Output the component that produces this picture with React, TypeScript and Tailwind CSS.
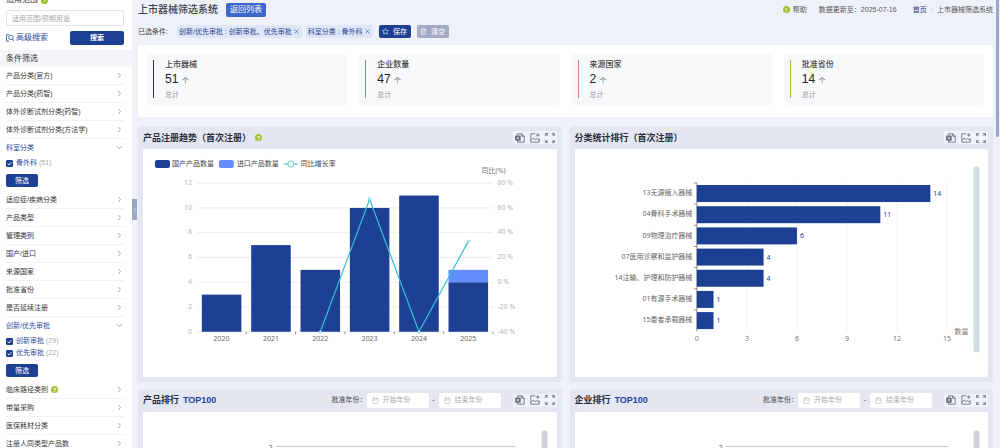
import React, { ReactNode, useState } from "react";
import { Calendar, ChevronDown, ChevronLeft, ChevronRight, Star, Trash2, X } from "lucide-react";

type FilterOption = { label: string; count: number };

type Filter = {
  label: string;
  help?: boolean;
  options?: FilterOption[];
};

const filters: Filter[] = [
  { label: "产品分类(官方)" },
  { label: "产品分类(药智)" },
  { label: "体外诊断试剂分类(药智)" },
  { label: "体外诊断试剂分类(方法学)" },
  { label: "科室分类", options: [{ label: "骨外科", count: 51 }] },
  { label: "适应症/疾病分类" },
  { label: "产品类型" },
  { label: "管理类别" },
  { label: "国产/进口" },
  { label: "来源国家" },
  { label: "批准省份" },
  { label: "是否延续注册" },
  {
    label: "创新/优先审批",
    options: [
      { label: "创新审批", count: 29 },
      { label: "优先审批", count: 22 },
    ],
  },
  { label: "临床路径类别", help: true },
  { label: "带量采购" },
  { label: "医保耗材分类" },
  { label: "注册人同类型产品数" },
];

const stats = [
  { label: "上市器械", value: 51, bar: "bg-[#2b3350]" },
  { label: "企业数量", value: 47, bar: "bg-[#6f93d8]" },
  { label: "来源国家", value: 2, bar: "bg-[#e08080]" },
  { label: "批准省份", value: 14, bar: "bg-[#a3bd2c]" },
];

const trend = [
  { year: 2020, home: 3, imported: 0 },
  { year: 2021, home: 7, imported: 0 },
  { year: 2022, home: 5, imported: 0, rate: -40 },
  { year: 2023, home: 10, imported: 0, rate: 67 },
  { year: 2024, home: 11, imported: 0, rate: -40 },
  { year: 2025, home: 4, imported: 1, rate: 33 },
];

const ranking = [
  { label: "13无源植入器械", value: 14 },
  { label: "04骨科手术器械", value: 11 },
  { label: "09物理治疗器械", value: 6 },
  { label: "07医用诊察和监护器械", value: 4 },
  { label: "14注输、护理和防护器械", value: 4 },
  { label: "01有源手术器械", value: 1 },
  { label: "15患者承载器械", value: 1 },
];

function HelpDot({ mark = "?" }: { mark?: string }) {
  return (
    <span className="inline-flex h-[7px] w-[7px] shrink-0 items-center justify-center rounded-full bg-[#9fbf2a] text-[6px] leading-none font-bold text-white">
      {mark}
    </span>
  );
}

function FilterRow({ filter }: { filter: Filter }) {
  const [open, setOpen] = useState(Boolean(filter.options));

  return (
    <li>
      <button
        onClick={() => setOpen((prev) => !prev)}
        className={`flex h-[18px] w-full items-center justify-between border-b text-left ${
          open && filter.options ? "border-transparent" : "border-[#f1f2f4]"
        }`}>
        <span
          className={`flex items-center gap-[3px] whitespace-nowrap ${
            filter.options ? "text-[#2c4c9c]" : "text-[#333]"
          }`}>
          {filter.label}
          {filter.help && <HelpDot />}
        </span>
        {open && filter.options ? (
          <ChevronDown size={9} className="text-[#888]" />
        ) : (
          <ChevronRight size={9} className="text-[#888]" />
        )}
      </button>
      {open && filter.options && (
        <div className="pb-1">
          {filter.options.map((option) => (
            <label key={option.label} className="flex h-3 items-center gap-[3px] text-[#2c4c9c]">
              <span className="relative flex h-[7px] w-[7px]">
                <input
                  type="checkbox"
                  defaultChecked
                  className="peer h-[7px] w-[7px] appearance-none rounded-[1px] border border-[#1d4094] checked:bg-[#1d4094]"
                />
                <svg
                  viewBox="0 0 7 7"
                  className="pointer-events-none absolute inset-0 hidden peer-checked:block">
                  <path d="M1.6 3.6 3 5l2.5-2.9" fill="none" stroke="#fff" strokeWidth="0.9" />
                </svg>
              </span>
              {option.label}
              <span className="-ml-px text-[#aaa]">({option.count})</span>
            </label>
          ))}
          <button className="mt-[5px] flex h-[13px] w-8 items-center justify-center rounded-[2px] bg-[#1d4094] text-white">
            筛选
          </button>
        </div>
      )}
    </li>
  );
}

function Sidebar() {
  return (
    <aside className="w-[132px] shrink-0 overflow-hidden bg-white text-[7px] leading-[10px]">
      <div className="-mt-[6px] pr-2 pl-[6px]">
        <label htmlFor="scope" className="flex h-[12px] items-center gap-[3px] text-[8px] text-[#333]">
          适用范围
          <HelpDot />
        </label>
        <input
          id="scope"
          placeholder="适用范围/预期用途"
          className="mt-1 block h-4 w-full rounded-[2px] border border-[#e2e4e8] px-[5px] placeholder:text-[#aaa]"
        />
        <div className="mt-[5px] flex items-center justify-between">
          <a href="#advanced" className="flex items-center gap-[2px] text-[8px] text-[#2c4c9c]">
            <svg width="8" height="8" viewBox="0 0 8 8" fill="none" stroke="currentColor" strokeWidth="0.8">
              <path d="M3 .6H.5v6.6h2.6" />
              <circle cx="4.9" cy="3.4" r="2.2" />
              <path d="m6.4 5 1.4 2.2" />
            </svg>
            高级搜索
          </a>
          <button className="h-[14px] w-[54px] rounded-[2px] bg-[#1d4094] font-bold text-white">搜索</button>
        </div>
      </div>
      <h2 className="mt-[5px] flex h-[17px] items-center bg-[#f4f5f8] pl-[6px] text-[8px] text-[#333]">
        条件筛选
      </h2>
      <ul className="pr-2 pl-[6px]">
        {filters.map((filter) => (
          <FilterRow key={filter.label} filter={filter} />
        ))}
      </ul>
    </aside>
  );
}

function Tag({ children }: { children: ReactNode }) {
  return (
    <span className="flex h-[13px] items-center gap-px rounded-[2px] bg-[#dfe6f7] px-[2px] text-[#26428f]">
      {children}
      <button aria-label="移除">
        <X size={7} />
      </button>
    </span>
  );
}

function Header() {
  return (
    <header className="text-[7px] leading-[10px]">
      <div className="flex h-[19px] items-center justify-between">
        <div className="flex items-center gap-2">
          <h1 className="text-[10px] font-medium text-[#3a3f4d]">上市器械筛选系统</h1>
          <button className="h-[14px] rounded-[2px] bg-[#3d68cb] px-[4px] text-[8px] text-white">返回列表</button>
        </div>
        <div className="flex items-center text-[#555]">
          <HelpDot mark="!" />
          <a href="#help" className="ml-[3px]">帮助</a>
          <span className="ml-3">数据更新至：2025-07-16</span>
          <nav className="ml-4 flex gap-1">
            <a href="#home" className="text-[#26327f]">首页</a>
            <span className="text-[#bbb]">›</span>
            <span>上市器械筛选系统</span>
          </nav>
        </div>
      </div>
      <div className="mt-[6px] flex items-center">
        <span className="mr-[9px] text-[#444]">已选条件:</span>
        <div className="flex gap-1">
          <Tag>创新/优先审批 : 创新审批、优先审批</Tag>
          <Tag>科室分类 : 骨外科</Tag>
        </div>
        <button className="ml-[6px] flex h-[13px] w-8 items-center justify-center gap-1 rounded-[2px] bg-[#1d4094] text-white">
          <Star size={7} />
          保存
        </button>
        <button className="ml-[6px] flex h-[13px] w-8 items-center justify-center gap-1 rounded-[2px] bg-[#a4aac5] text-white">
          <Trash2 size={7} />
          清空
        </button>
      </div>
    </header>
  );
}

function Stats() {
  return (
    <section className="mt-[7px] grid grid-cols-4 gap-3 rounded-[2px] bg-white px-[9px] pt-[9px] pb-3">
      {stats.map((stat) => (
        <div key={stat.label} className="flex gap-[11px] rounded-[2px] bg-[#f7f8fa] px-[6px] pt-[6px] pb-[5px]">
          <span className={`mb-[2px] w-px ${stat.bar}`} />
          <div>
            <p className="-mt-px text-[8px] leading-[11px] font-medium text-[#444]">{stat.label}</p>
            <p className="text-[12px] leading-[18px] text-[#222]">
              {stat.value} <span className="text-[7px] text-[#666]">个</span>
            </p>
            <p className="text-[7px] leading-[10px] text-[#999]">总计</p>
          </div>
        </div>
      ))}
    </section>
  );
}

function PanelTools() {
  return (
    <div className="flex h-[13px] items-center gap-[5px] rounded-[2px] bg-[#f0f2f9] px-[2px] text-[#5a6174]">
      <button aria-label="导出表格">
        <svg width="10" height="10" viewBox="0 0 10 10" fill="none" stroke="currentColor" strokeWidth="0.8">
          <path d="M2.5 2.2V.8h4.3l2.4 2.2v6.2H2.5V8" />
          <path d="M6.6.8v2.4h2.6" />
          <rect x="0.2" y="2.4" width="5.4" height="5.4" rx="0.6" fill="currentColor" stroke="none" />
          <path d="m1.7 3.7 2.4 2.8M4.1 3.7 1.7 6.5" stroke="#f0f2f9" />
        </svg>
      </button>
      <button aria-label="导出图片">
        <svg width="10" height="10" viewBox="0 0 10 10" fill="none" stroke="currentColor" strokeWidth="0.8">
          <path d="M5.4.8H.8v8.4h8.4V5.2" />
          <path d="m1 7.4 2.3-2.4 1.8 1.7 1.3-1.2 2.6 1.8" />
          <path d="M7.8.3v3.4M6.1 2h3.4" />
        </svg>
      </button>
      <button aria-label="全屏">
        <svg width="10" height="10" viewBox="0 0 10 10" fill="none" stroke="currentColor" strokeWidth="0.9">
          <path d="M.7 3.1V.7h2.4M6.9.7h2.4v2.4M9.3 6.9v2.4H6.9M3.1 9.3H.7V6.9" />
          <path d="m.7.7 2.2 2.2M9.3.7 7.1 2.9M9.3 9.3 7.1 7.1M.7 9.3l2.2-2.2" strokeWidth="0.6" />
        </svg>
      </button>
    </div>
  );
}

type PanelProps = {
  title: ReactNode;
  controls?: ReactNode;
  children: ReactNode;
};

function Panel({ title, controls, children }: PanelProps) {
  return (
    <section className="rounded-[2px] bg-[#e4e7f1] px-[5px] pb-[5px]">
      <div className="flex h-[23px] items-center justify-between">
        <h3 className="flex items-center gap-1 text-[9px] leading-[12px] font-bold text-[#2a2e3a]">{title}</h3>
        <div className="flex items-center gap-3">
          {controls}
          <PanelTools />
        </div>
      </div>
      <div className="rounded-[2px] bg-white">{children}</div>
    </section>
  );
}

function YearField({ label }: { label: string }) {
  return (
    <span className="flex h-[15px] w-[62px] items-center gap-1 rounded-[2px] bg-white px-[5px]">
      <Calendar size={7} className="shrink-0 text-[#bbb]" />
      <input aria-label={label} placeholder={label} className="w-full min-w-0 placeholder:text-[#aaa]" />
    </span>
  );
}

function YearRange() {
  return (
    <div className="flex items-center text-[7px] leading-[10px] text-[#444]">
      <span>批准年份：</span>
      <YearField label="开始年份" />
      <span className="w-[10px] text-center">-</span>
      <YearField label="结束年份" />
    </div>
  );
}

const chartText = "text-[7px] [font-family:'Noto_Sans','Noto_Sans_CJK_SC',sans-serif]";

function TrendChart() {
  const left = 54;
  const base = 183;
  const step = 49.4;
  const unit = 12.4;
  const center = (i: number) => left + step * (i + 0.5);
  const rateY = (rate: number) => base - ((rate + 40) / 120) * unit * 12;
  const points = trend.flatMap((d, i) =>
    d.rate === undefined ? [] : [{ x: center(i), y: rateY(d.rate) }]
  );

  return (
    <svg viewBox="0 0 414 228" className={`block w-full ${chartText}`}>
      <rect x="12" y="11" width="15" height="8" rx="2" fill="#1d4094" />
      <text x="29" y="17.5" fill="#444">国产产品数量</text>
      <rect x="76" y="11" width="15" height="8" rx="2" fill="#638dfb" />
      <text x="94" y="17.5" fill="#444">进口产品数量</text>
      <path d="M141 15h14" stroke="#35b9bd" />
      <circle cx="148" cy="15" r="3" fill="#fff" stroke="#35b9bd" strokeWidth="0.8" />
      <text x="158" y="17.5" fill="#444">同比增长率</text>
      <text x="339" y="24" fill="#777">同比(%)</text>
      {[0, 2, 4, 6, 8, 10, 12].map((n, i) => {
        const y = base - n * unit;
        return (
          <g key={n} fill="#b5b5b5">
            <path d={`M${left} ${y}H350`} stroke="#e6e8ee" strokeWidth="0.8" />
            <text x="49" y={y + 1.8} textAnchor="end">{n}</text>
            <text x="355" y={y + 1.8}>{-40 + i * 20} %</text>
          </g>
        );
      })}
      {trend.map((d, i) => (
        <g key={d.year}>
          <rect x={center(i) - 19.8} y={base - d.home * unit} width="39.6" height={d.home * unit} fill="#1d4094" />
          <rect
            x={center(i) - 19.8}
            y={base - (d.home + d.imported) * unit}
            width="39.6"
            height={d.imported * unit}
            fill="#638dfb"
          />
          <path d={`M${left + step * (i + 1)} ${base}v2.5`} stroke="#777" strokeWidth="0.8" />
          <text x={center(i)} y="192.5" textAnchor="middle" fill="#666">{d.year}</text>
        </g>
      ))}
      <polyline points={points.map((p) => `${p.x},${p.y}`).join(" ")} fill="none" stroke="#35bfd0" strokeWidth="1.2" />
      {points.map((p) => (
        <circle key={p.x} cx={p.x} cy={p.y} r="1.2" fill="#fff" stroke="#35bfd0" strokeWidth="0.7" />
      ))}
    </svg>
  );
}

function RankingChart() {
  const left = 122;
  const top = 34;
  const row = 21.2;
  const unit = 16.7;

  return (
    <svg viewBox="0 0 414 228" className={`block w-full ${chartText}`}>
      {[0, 3, 6, 9, 12, 15].map((n) => (
        <g key={n}>
          {n > 0 && <path d={`M${left + n * unit} ${top}v148.4`} stroke="#eceef2" strokeWidth="0.8" />}
          <text x={left + n * unit} y="192.5" textAnchor="middle" fill="#777">{n}</text>
        </g>
      ))}
      <path d={`M${left} ${top}v148.4`} stroke="#777" strokeWidth="0.8" />
      {ranking.map((d, i) => (
        <g key={d.label}>
          <path d={`M${left - 3} ${top + row * i}h3`} stroke="#777" strokeWidth="0.8" />
          <rect x={left} y={top + row * i + 2.1} width={d.value * unit} height="17" fill="#1d4094" />
          <text x={left - 4.5} y={top + row * i + 12.3} textAnchor="end" fill="#666">{d.label}</text>
          <text x={left + d.value * unit + 3} y={top + row * i + 13.2} fill="#26428f">{d.value}</text>
        </g>
      ))}
      <text x="380" y="185" fill="#777">数量</text>
      <rect x="399" y="17.5" width="6" height="186" rx="2" fill="#d3dce6" />
    </svg>
  );
}

// start and end are where the value axis runs inside the panel
function TopChart({ start, end }: { start: number; end: number }) {
  return (
    <svg viewBox="0 0 414 228" className={`block w-full ${chartText}`}>
      <text x={start - 3} y="38.5" textAnchor="end" fill="#555">2</text>
      <path d={`M${start} 34.5H${end}`} stroke="#bbb" strokeWidth="0.8" />
      <rect x="399" y="18.5" width="6" height="186" rx="2" fill="#cdd2dc" />
    </svg>
  );
}

export default function App() {
  return (
    <div className="flex h-screen overflow-hidden bg-[#eff1f9] [font-family:'Liberation_Sans','Noto_Sans_CJK_SC',sans-serif]">
      <Sidebar />
      <main className="relative min-w-0 flex-1 pr-[3px] pl-[6px]">
        <button
          aria-label="收起"
          className="absolute top-[199px] left-0 flex h-[21px] w-[5px] items-center justify-center bg-[#9aa6c6] text-white">
          <ChevronLeft size={6} className="shrink-0" />
        </button>
        <Header />
        <Stats />
        <div className="mt-[9px] grid grid-cols-2 gap-x-2 gap-y-[7px]">
          <Panel
            title={
              <>
                产品注册趋势（首次注册）
                <HelpDot />
              </>
            }>
            <TrendChart />
          </Panel>
          <Panel title="分类统计排行（首次注册）">
            <RankingChart />
          </Panel>
          <Panel
            title={
              <>
                产品排行<span className="text-[#1f439c]">TOP100</span>
              </>
            }
            controls={<YearRange />}>
            <TopChart start={133} end={373} />
          </Panel>
          <Panel
            title={
              <>
                企业排行<span className="text-[#1f439c]">TOP100</span>
              </>
            }
            controls={<YearRange />}>
            <TopChart start={151} end={374} />
          </Panel>
        </div>
      </main>
      <div className="w-1 shrink-0">
        <div className="h-[137px] w-[3px] rounded-b-[2px] bg-[#9ba7c6]" />
      </div>
    </div>
  );
}
